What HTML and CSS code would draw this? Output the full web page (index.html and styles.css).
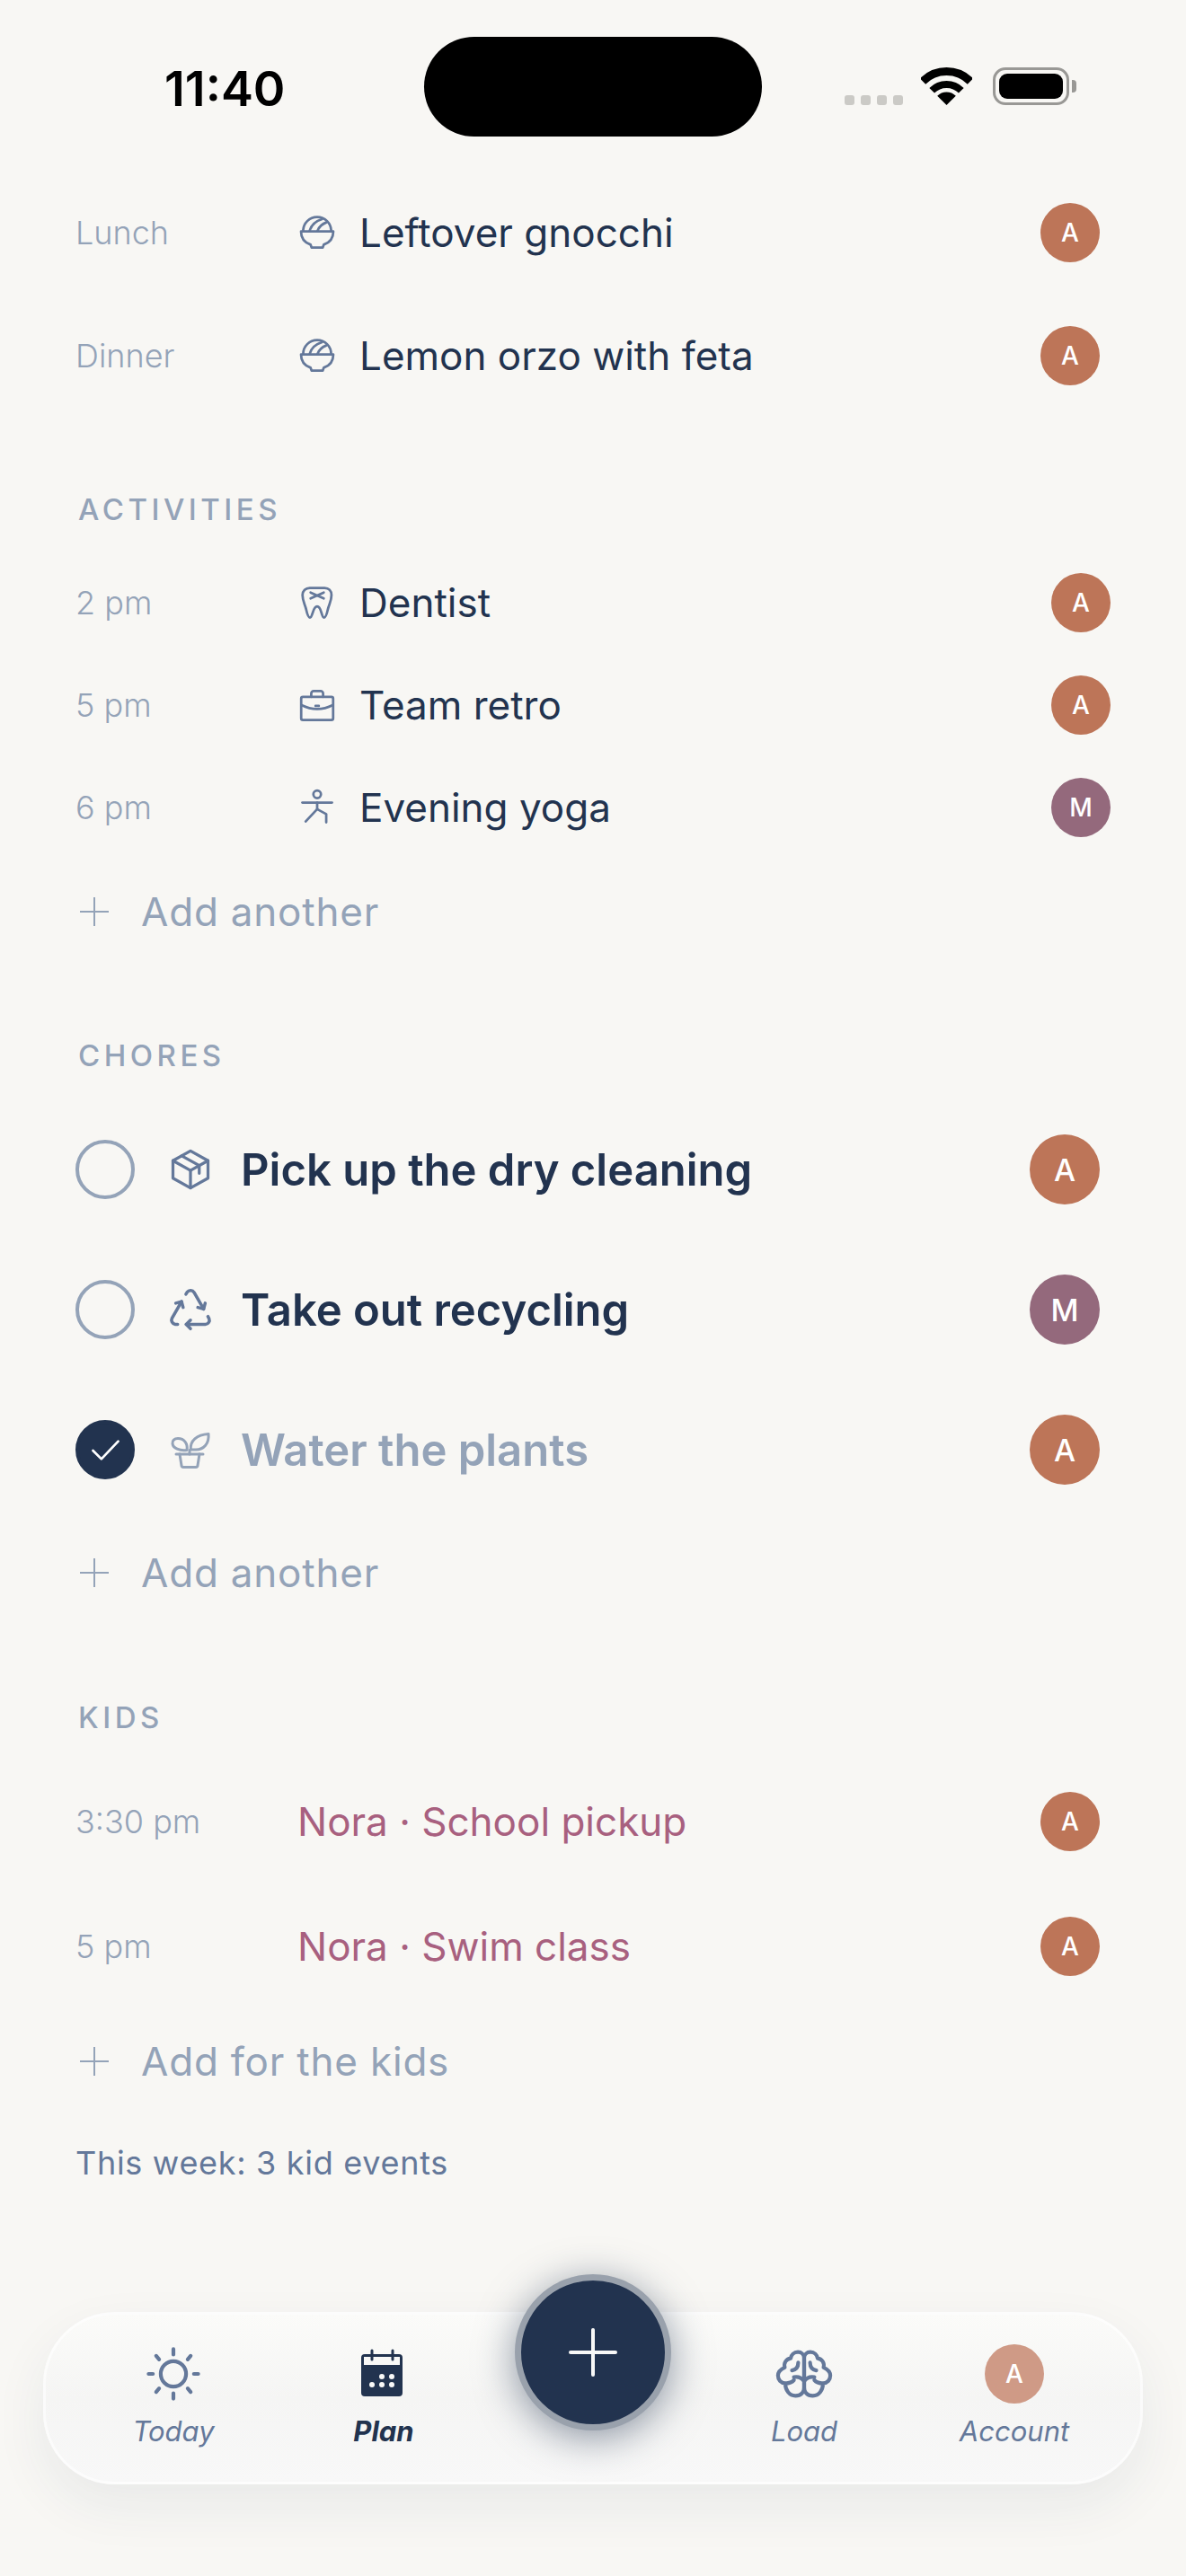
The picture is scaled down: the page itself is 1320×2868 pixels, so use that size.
FILE: index.html
```html
<!DOCTYPE html>
<html lang="en">
<head>
    <meta charset="UTF-8">
    <meta name="viewport" content="width=device-width, initial-scale=1.0">
    <title>Plan</title>
    <link rel="stylesheet" href="styles.css">
</head>
<body>
    <svg class="icon-defs" width="0" height="0">
        <defs>
            <g id="i-bowl">
                <path d="M3.500 11A8.500 8.500 0 0 1 20.500 11"/>
                <path d="M2.200 11.300h19.600c0 4-2.400 6.800-5.800 8l-.6 1.700H8.600L8 19.300c-3.400-1.200-5.800-4-5.800-8z"/>
                <path d="M7.500 10.800c.8-3 3.600-5.800 7.400-7"/>
                <path d="M12.300 10.800c.7-2 2.300-3.800 5.200-5"/>
            </g>
            <g id="i-tooth">
                <path d="M7.500 3h9c2.500 0 4.200 1.800 4.200 4.400 0 3.600-1.500 5.500-2.200 8.600-.5 2.300-1 5-2.300 5-1.800 0-1.400-6.800-4.200-6.800S9.400 21 7.600 21c-1.300 0-1.800-2.700-2.300-5-.7-3.100-2.200-5-2.200-8.600C3.100 4.800 5 3 7.500 3z"/>
                <path d="M8 5.800l8 3.600M16 5.800l-8 3.600"/>
            </g>
            <g id="i-case">
                <rect x="2.300" y="7" width="19.400" height="14" rx="1"/>
                <path d="M8.400 7V5a1.500 1.500 0 0 1 1.500-1.500h4.200A1.500 1.500 0 0 1 15.600 5v2"/>
                <path d="M2.500 12c6 3 13 3 19 0"/>
                <path d="M11 12.500h2"/>
            </g>
            <g id="i-yoga">
                <circle cx="12" cy="4" r="2.300"/>
                <path d="M3 9h18"/>
                <path d="M12 9v4L5 20.500"/>
                <path d="M12 13l5.500 3v5"/>
            </g>
            <g id="i-box">
                <path d="M12 2.500l9 5v9l-9 5-9-5v-9z"/>
                <path d="M3 7.500l9 5 9-5"/>
                <path d="M12 12.500v9"/>
                <path d="M7.500 5l9 5v4"/>
            </g>
            <g id="i-recycle">
                <path d="M12 17l-2 2l2 2"/>
                <path d="M10 19h9a2 2 0 0 0 1.750 -2.750l-.55 -1"/>
                <path d="M8.536 11l-.732 -2.732l-2.732 .732"/>
                <path d="M7.804 8.268l-4.500 7.794a2 2 0 0 0 1.506 2.890l1.141 .024"/>
                <path d="M15.464 11l2.732 .732l.732 -2.732"/>
                <path d="M18.196 11.732l-4.500 -7.794a2 2 0 0 0 -3.256 -.140l-.591 .976"/>
            </g>
            <g id="i-plant">
                <path d="M4 14.500h15"/>
                <path d="M6 14.500l1 6.300a1 1 0 0 0 1 .9h7a1 1 0 0 0 1-.9l1-6.300"/>
                <path d="M11.500 14.500v-2.300"/>
                <path d="M12.200 12c-.6-5 3.300-8.300 9.800-8.800.5 5.200-2.400 9.100-7.600 8.800z"/>
                <path d="M10 12.200c.6-3.400-1.400-6.400-5-6.400-2 0-3.200 1.200-3 2.800.3 2.600 4 4.200 8 3.600z"/>
            </g>
        </defs>
    </svg>

    <div class="page">
        <!-- Status bar -->
        <header class="status">
            <div class="status-time">11:40</div>
            <div class="island"></div>
            <div class="status-right">
                <div class="signal"><span></span><span></span><span></span><span></span></div>
                <svg class="wifi" viewBox="0 0 57 42" width="57" height="42">
                    <path class="wifi-arc" stroke-width="9" d="M2 15.500A37.500 37.500 0 0 1 55 15.500"/>
                    <path class="wifi-arc" stroke-width="8" d="M12.200 25.700A23 23 0 0 1 44.800 25.700"/>
                    <path d="M28.500 42L18.200 31.700A14.500 14.500 0 0 1 38.800 31.700Z"/>
                </svg>
                <div class="battery"><div class="battery-fill"></div></div>
                <div class="battery-cap"></div>
            </div>
        </header>

        <!-- Meals -->
        <section class="meals">
            <div class="row row-meal">
                <span class="time">Lunch</span>
                <svg class="icon" viewBox="0 0 24 24"><use href="#i-bowl"/></svg>
                <span class="title">Leftover gnocchi</span>
                <span class="avatar avatar-a">A</span>
            </div>
            <div class="row row-meal">
                <span class="time">Dinner</span>
                <svg class="icon" viewBox="0 0 24 24"><use href="#i-bowl"/></svg>
                <span class="title">Lemon orzo with feta</span>
                <span class="avatar avatar-a">A</span>
            </div>
        </section>

        <!-- Activities -->
        <section class="activities">
            <h2 class="section-label">ACTIVITIES</h2>
            <div class="row row-activity">
                <span class="time">2 pm</span>
                <svg class="icon" viewBox="0 0 24 24"><use href="#i-tooth"/></svg>
                <span class="title">Dentist</span>
                <span class="avatar avatar-a">A</span>
            </div>
            <div class="row row-activity">
                <span class="time">5 pm</span>
                <svg class="icon" viewBox="0 0 24 24"><use href="#i-case"/></svg>
                <span class="title">Team retro</span>
                <span class="avatar avatar-a">A</span>
            </div>
            <div class="row row-activity">
                <span class="time">6 pm</span>
                <svg class="icon" viewBox="0 0 24 24"><use href="#i-yoga"/></svg>
                <span class="title">Evening yoga</span>
                <span class="avatar avatar-m">M</span>
            </div>
            <div class="add-row"><span class="add-plus"></span>Add another</div>
        </section>

        <!-- Chores -->
        <section class="chores">
            <h2 class="section-label">CHORES</h2>
            <div class="row row-chore">
                <span class="check"></span>
                <svg class="icon icon-chore" viewBox="0 0 24 24"><use href="#i-box"/></svg>
                <span class="chore-title">Pick up the dry cleaning</span>
                <span class="avatar avatar-lg avatar-a">A</span>
            </div>
            <div class="row row-chore">
                <span class="check"></span>
                <svg class="icon icon-chore" viewBox="1 1 22 22"><use href="#i-recycle"/></svg>
                <span class="chore-title">Take out recycling</span>
                <span class="avatar avatar-lg avatar-m">M</span>
            </div>
            <div class="row row-chore is-done">
                <span class="check check-done">
                    <svg viewBox="0 0 24 24" width="50" height="50"><path d="M5.500 12.500l4.500 4.500 9-9.500"/></svg>
                </span>
                <svg class="icon icon-chore" viewBox="-1 -1 26 26"><use href="#i-plant"/></svg>
                <span class="chore-title">Water the plants</span>
                <span class="avatar avatar-lg avatar-a">A</span>
            </div>
            <div class="add-row"><span class="add-plus"></span>Add another</div>
        </section>

        <!-- Kids -->
        <section class="kids">
            <h2 class="section-label">KIDS</h2>
            <div class="row row-kid">
                <span class="time">3:30 pm</span>
                <span class="title title-kid">Nora · School pickup</span>
                <span class="avatar avatar-a">A</span>
            </div>
            <div class="row row-kid">
                <span class="time">5 pm</span>
                <span class="title title-kid">Nora · Swim class</span>
                <span class="avatar avatar-a">A</span>
            </div>
            <div class="add-row"><span class="add-plus"></span>Add for the kids</div>
            <p class="week-note">This week: 3 kid events</p>
        </section>

        <!-- Floating tab bar -->
        <nav class="tabbar">
            <div class="tab">
                <svg class="tab-icon" viewBox="0 0 24 24">
                    <circle cx="12" cy="12" r="4.700"/>
                    <path d="M2.800 12h1.600M19.600 12h1.600M12 2.800v2M12 19.200v2M5.600 5.300l1.100 1.300M18.400 5.300l-1.100 1.300M5.600 18.700l1.100-1.300M18.400 18.700l-1.100-1.300"/>
                </svg>
                <span class="tab-label">Today</span>
            </div>
            <div class="tab tab-active">
                <svg class="tab-icon tab-calendar" viewBox="0 0 72 72">
                    <rect class="cal-body" x="11" y="14" width="46" height="47" rx="4"/>
                    <rect class="cal-strip" x="14" y="17" width="40" height="9"/>
                    <path class="cal-ring" d="M23 10v10M46 10v10"/>
                    <circle class="cal-dot" cx="34" cy="39" r="3"/>
                    <circle class="cal-dot" cx="45" cy="39" r="3"/>
                    <circle class="cal-dot" cx="23" cy="48" r="3"/>
                    <circle class="cal-dot" cx="34" cy="48" r="3"/>
                    <circle class="cal-dot" cx="45" cy="48" r="3"/>
                </svg>
                <span class="tab-label">Plan</span>
            </div>
            <div class="tab tab-spacer"></div>
            <div class="tab">
                <svg class="tab-icon" viewBox="0 0 24 24">
                    <g id="brain-half">
                        <path d="M12 6.200C12 4.700 10.900 3.900 9.700 3.900 8.200 3.900 7.200 5 7 6.200 5.200 6.500 4.400 8 4.800 9.600 3.200 10.300 2.300 11.200 2.300 12.600 2.300 14.200 3.300 15.300 5 15.500 5 18 6.500 20.100 8.800 20.100 10.800 20.100 12 18.800 12 17Z"/>
                        <path d="M9.800 7.800c0 1.500-.9 2.600-2.300 2.900"/>
                        <path d="M12 14.700c-1-1.400-2.300-1.800-3.800-1.500"/>
                        <path d="M5 15.500c1.400 0 2.500-.3 3.200-1.200"/>
                    </g>
                    <use href="#brain-half" transform="matrix(-1 0 0 1 24 0)"/>
                </svg>
                <span class="tab-label">Load</span>
            </div>
            <div class="tab">
                <span class="avatar avatar-tab">A</span>
                <span class="tab-label">Account</span>
            </div>
        </nav>

        <button class="fab"><span class="fab-plus"></span></button>
    </div>
</body>
</html>
```

FILE: styles.css
```css
/* Page */
body {
    margin: 0;
    background: #f8f7f4;
    font-family: "Inter", "Noto Sans", sans-serif;
    color: #22334f;
}

.icon-defs {
    position: absolute;
}

.page {
    position: relative;
    width: 1320px;
    height: 2868px;
    overflow: hidden;
}

/* Status bar */
.status {
    position: relative;
    height: 190px;
    box-sizing: border-box;
    padding: 68px 122px 0 183px;
    display: flex;
    justify-content: space-between;
    color: #000;
}

.status-time {
    font-size: 54px;
    font-weight: 600;
    line-height: 62px;
}

.island {
    position: absolute;
    left: 472px;
    top: 41px;
    width: 376px;
    height: 111px;
    border-radius: 56px;
    background: #000;
}

.status-right {
    display: flex;
    align-items: flex-end;
    height: 42px;
    margin-top: 7px;
}

.signal {
    display: flex;
    gap: 7px;
    margin-right: 20px;
}

.signal span {
    width: 11px;
    height: 11px;
    border-radius: 3px;
    background: #cbcac6;
}

.wifi {
    margin-right: 23px;
}

.wifi-arc {
    fill: none;
    stroke: #000;
}

.battery {
    box-sizing: border-box;
    width: 85px;
    height: 42px;
    padding: 4px;
    border: 3px solid #999895;
    border-radius: 14px;
}

.battery-fill {
    height: 100%;
    border-radius: 9px;
    background: #000;
}

.battery-cap {
    width: 5px;
    height: 14px;
    margin: 0 0 14px 3px;
    border-radius: 0 4px 4px 0;
    background: #999895;
}

/* Rows */
.row {
    display: flex;
    align-items: center;
    padding: 0 96px 0 84px;
}

.row-meal {
    height: 137px;
}

.row-activity {
    height: 114px;
    padding-right: 84px;
}

.row-chore {
    height: 156px;
}

.row-kid {
    height: 139px;
}

.time {
    flex: 0 0 247px;
    font-size: 36px;
    font-weight: 300;
    color: #94a3b8;
}

.icon {
    flex: 0 0 44px;
    width: 44px;
    height: 44px;
    margin-right: 25px;
    fill: none;
    stroke: #64789a;
    stroke-width: 1.500;
    stroke-linecap: round;
    stroke-linejoin: round;
}

.title {
    flex: 1;
    font-size: 44px;
    font-weight: 440;
    color: #22334f;
}

.title-kid {
    color: #a8607f;
}

.avatar {
    flex: 0 0 66px;
    width: 66px;
    height: 66px;
    border-radius: 50%;
    display: flex;
    justify-content: center;
    align-items: center;
    color: #fff;
    font-size: 28px;
    font-weight: 500;
}

.avatar-lg {
    flex-basis: 78px;
    width: 78px;
    height: 78px;
    font-size: 34px;
}

.avatar-a {
    background: #bd7558;
}

.avatar-m {
    background: #94697c;
}

/* Section headings */
.section-label {
    margin: 0;
    height: 40px;
    padding-left: 87px;
    font-size: 33px;
    font-weight: 500;
    line-height: 40px;
    letter-spacing: 4.500px;
    color: #94a3b8;
}

.activities {
    padding-top: 83px;
}

.activities .section-label {
    margin-bottom: 27px;
}

.chores {
    padding-top: 81px;
}

.chores .section-label {
    margin-bottom: 29px;
}

.kids {
    padding-top: 82px;
}

.kids .section-label {
    margin-bottom: 26px;
}

/* Add rows */
.add-row {
    display: flex;
    align-items: center;
    height: 118px;
    padding-left: 89px;
    font-size: 44px;
    letter-spacing: 0.800px;
    color: #94a3b8;
}

.add-plus {
    position: relative;
    width: 32px;
    height: 32px;
    margin-right: 36px;
}

.add-plus::before,
.add-plus::after {
    content: "";
    position: absolute;
    background: #94a3b8;
}

.add-plus::before {
    left: 0;
    right: 0;
    top: 15px;
    height: 2px;
}

.add-plus::after {
    top: 0;
    bottom: 0;
    left: 15px;
    width: 2px;
}

.week-note {
    margin: 34px 0 0;
    padding-left: 84px;
    font-size: 36px;
    letter-spacing: 0.700px;
    line-height: 40px;
    color: #64789a;
}

/* Chores */
.check {
    box-sizing: border-box;
    flex: 0 0 66px;
    width: 66px;
    height: 66px;
    margin-right: 36px;
    border: 4px solid #94a3b8;
    border-radius: 50%;
    display: flex;
    justify-content: center;
    align-items: center;
}

.check svg {
    flex: none;
    fill: none;
    stroke: #fff;
    stroke-width: 1.300;
    stroke-linecap: round;
    stroke-linejoin: round;
}

.check-done {
    border-color: #22334f;
    background: #22334f;
}

.icon-chore {
    flex-basis: 52px;
    width: 52px;
    height: 52px;
    margin-right: 30px;
}

.chore-title {
    flex: 1;
    font-size: 49px;
    font-weight: 600;
}

.is-done .chore-title {
    color: #94a3b8;
}

.is-done .icon {
    stroke: #94a3b8;
}

/* Tab bar */
.tabbar {
    position: absolute;
    left: 48px;
    top: 2574px;
    box-sizing: border-box;
    width: 1224px;
    height: 192px;
    padding: 0 0 0 25px;
    display: grid;
    grid-template-columns: repeat(5, 234px);
    border: 3px solid rgba(255, 255, 255, 0.6);
    border-radius: 80px;
    background: linear-gradient(180deg, #fbfbf9 0%, #f5f5f4 50%, #f8f8f8 100%);
    box-shadow: 0 24px 60px rgba(34, 51, 79, 0.07);
}

.tab {
    display: flex;
    flex-direction: column;
    align-items: center;
    padding-top: 30px;
}

.tab-icon {
    width: 72px;
    height: 72px;
    fill: none;
    stroke: #64789a;
    stroke-width: 1.400;
    stroke-linecap: round;
    stroke-linejoin: round;
}

.tab-calendar {
    stroke: none;
}

.cal-body {
    fill: #22334f;
}

.cal-strip,
.cal-dot {
    fill: #f8f8f7;
}

.cal-ring {
    stroke: #22334f;
    stroke-width: 3px;
}

.tab-label {
    margin-top: 8px;
    font-size: 31px;
    font-style: italic;
    line-height: 40px;
    color: #64789a;
}

.tab-active .tab-label {
    font-weight: 700;
    color: #22334f;
}

.avatar-tab {
    flex: 0 0 66px;
    margin: 3px 0;
    background: #cf9a86;
}

/* Add button */
.fab {
    position: absolute;
    left: 573px;
    top: 2532px;
    box-sizing: border-box;
    width: 174px;
    height: 174px;
    padding: 0;
    border: 7px solid #99a1ac;
    border-radius: 50%;
    background: #22334f;
    box-shadow: 0 8px 44px rgba(34, 51, 79, 0.5);
    display: flex;
    justify-content: center;
    align-items: center;
}

.fab-plus {
    position: relative;
    width: 54px;
    height: 54px;
}

.fab-plus::before,
.fab-plus::after {
    content: "";
    position: absolute;
    background: #f8f8f7;
    border-radius: 2px;
}

.fab-plus::before {
    left: 0;
    right: 0;
    top: 25px;
    height: 4px;
}

.fab-plus::after {
    top: 0;
    bottom: 0;
    left: 25px;
    width: 4px;
}
```
